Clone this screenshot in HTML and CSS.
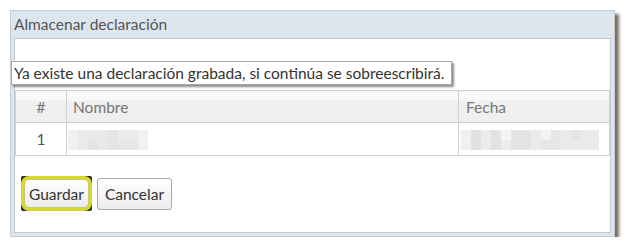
FILE: index.html
```html
<!DOCTYPE html>
<html lang="es">
<head>
<meta charset="utf-8">
<title>Almacenar declaración</title>
<link rel="stylesheet" href="styles.css">
</head>
<body>
<div class="dialog">
  <div class="dialog-title">Almacenar declaración</div>
  <div class="dialog-body">
    <div class="notice">Ya existe una declaración grabada, si continúa se sobreescribirá.</div>
    <table class="grid">
      <thead>
        <tr><th class="col-num">#</th><th class="col-name">Nombre</th><th class="col-date">Fecha</th></tr>
      </thead>
      <tbody>
        <tr>
          <td class="col-num">1</td>
          <td class="col-name"><span class="blur blur-name"></span></td>
          <td class="col-date"><span class="blur blur-date"></span></td>
        </tr>
      </tbody>
    </table>
    <div class="actions">
      <span class="focus-corners"><span class="focus-ring"><button class="btn btn-focused">Guardar</button></span></span>
      <button class="btn">Cancelar</button>
    </div>
  </div>
</div>
</body>
</html>
```

FILE: styles.css
```css
* { box-sizing: border-box; }
html, body { margin: 0; padding: 0; background: #fff; }
body {
  font-family: Lato, "Open Sans", "Liberation Sans", sans-serif;
  color: #444;
}
.dialog {
  margin: 10px 0 0 10px;
  width: 605px;
  height: 227px;
  background: #dce6ef;
  border: 1px solid #c4ccd4;
  padding: 0 3px 3px 3px;
  box-shadow: 4px 4px 3px rgba(80, 62, 40, 0.75);
  display: flex;
  flex-direction: column;
}
.dialog-title {
  height: 27px;
  line-height: 26px;
  font-size: 15.5px;
  color: #555;
}
.dialog-body {
  flex: 1;
  background: #fff;
  border: 1px solid #c8c8c8;
  display: flex;
  flex-direction: column;
  align-items: flex-start;
}
.notice {
  margin: 22px 0 0 -4px;
  width: 441px;
  height: 24px;
  line-height: 22px;
  padding-left: 2px;
  font-size: 15.5px;
  color: #333;
  background: #fff;
  border: 1px solid #a8a8a8;
  box-shadow: 2px 2px 2px rgba(0, 0, 0, 0.45);
  white-space: nowrap;
}
.grid {
  margin-top: 5px;
  width: 595px;
  border-collapse: collapse;
  font-size: 15.5px;
}
.grid th, .grid td {
  border: 1px solid #d0d0d0;
  text-align: left;
  font-weight: normal;
  padding: 0 6px;
}
.grid th {
  height: 32px;
  color: #777;
  background: linear-gradient(#f9f9f9 0, #f9f9f9 28%, #efefef 28%, #efefef 100%);
}
.grid td {
  height: 33px;
  color: #555;
}
.grid .col-num { width: 51px; text-align: center; }
.grid .col-name { width: 392px; padding-left: 6px; }
.grid .col-date { padding-left: 7px; }
.grid td.col-name, .grid td.col-date { padding-left: 1px; }
.blur {
  display: block;
  height: 20px;
  margin-top: 1px;
}
.blur-name {
  width: 80px;
  background:
    linear-gradient(to right, transparent 0 10px, #eaeaea 10px 20px, #e4e4e4 20px 30px, transparent 30px 50px, #e6e6e6 50px 70px, transparent 70px) 0 10px / 80px 10px no-repeat,
    linear-gradient(to right, #f0f0f0 0 10px, #e9e9e9 10px 40px, #e4e4e4 40px 50px, #ebebeb 50px 70px, #f1f1f1 70px 80px);
}
.blur-date {
  width: 138px;
  margin-left: 1px;
  background:
    linear-gradient(to right, transparent 0 40px, #f4f4f4 40px 50px, transparent 50px 80px, #f3f3f3 80px 90px, transparent 90px 110px, #e4e4e4 110px 120px, transparent 120px) 0 0 / 138px 10px no-repeat,
    linear-gradient(to right, #f0f0f0 0 10px, #e2e2e2 10px 20px, #ebebeb 20px 30px, #e2e2e2 30px 40px, #ececec 40px 50px, #e4e4e4 50px 70px, #ebebeb 70px 80px, #e6e6e6 80px 100px, #eaeaea 100px 138px);
}
.actions {
  margin: 20px 0 0 6px;
  display: flex;
  align-items: center;
  gap: 5px;
}
.focus-corners {
  display: inline-flex;
  background: #2a2a2a;
  border-radius: 2px;
}
.focus-ring {
  display: inline-flex;
  padding: 3px;
  background: #d9d923;
  border-radius: 8px;
}
.btn {
  font-family: Lato, "Open Sans", "Liberation Sans", sans-serif;
  font-size: 15.5px;
  color: #333;
  height: 32px;
  padding: 0 7px;
  border: 1px solid #aaa;
  border-radius: 3px;
  background: linear-gradient(#ffffff, #ececec);
  cursor: pointer;
}
.btn-focused {
  height: 29px;
  padding: 0 4px;
  border-color: #c8c87a;
  border-radius: 5px;
}
```
